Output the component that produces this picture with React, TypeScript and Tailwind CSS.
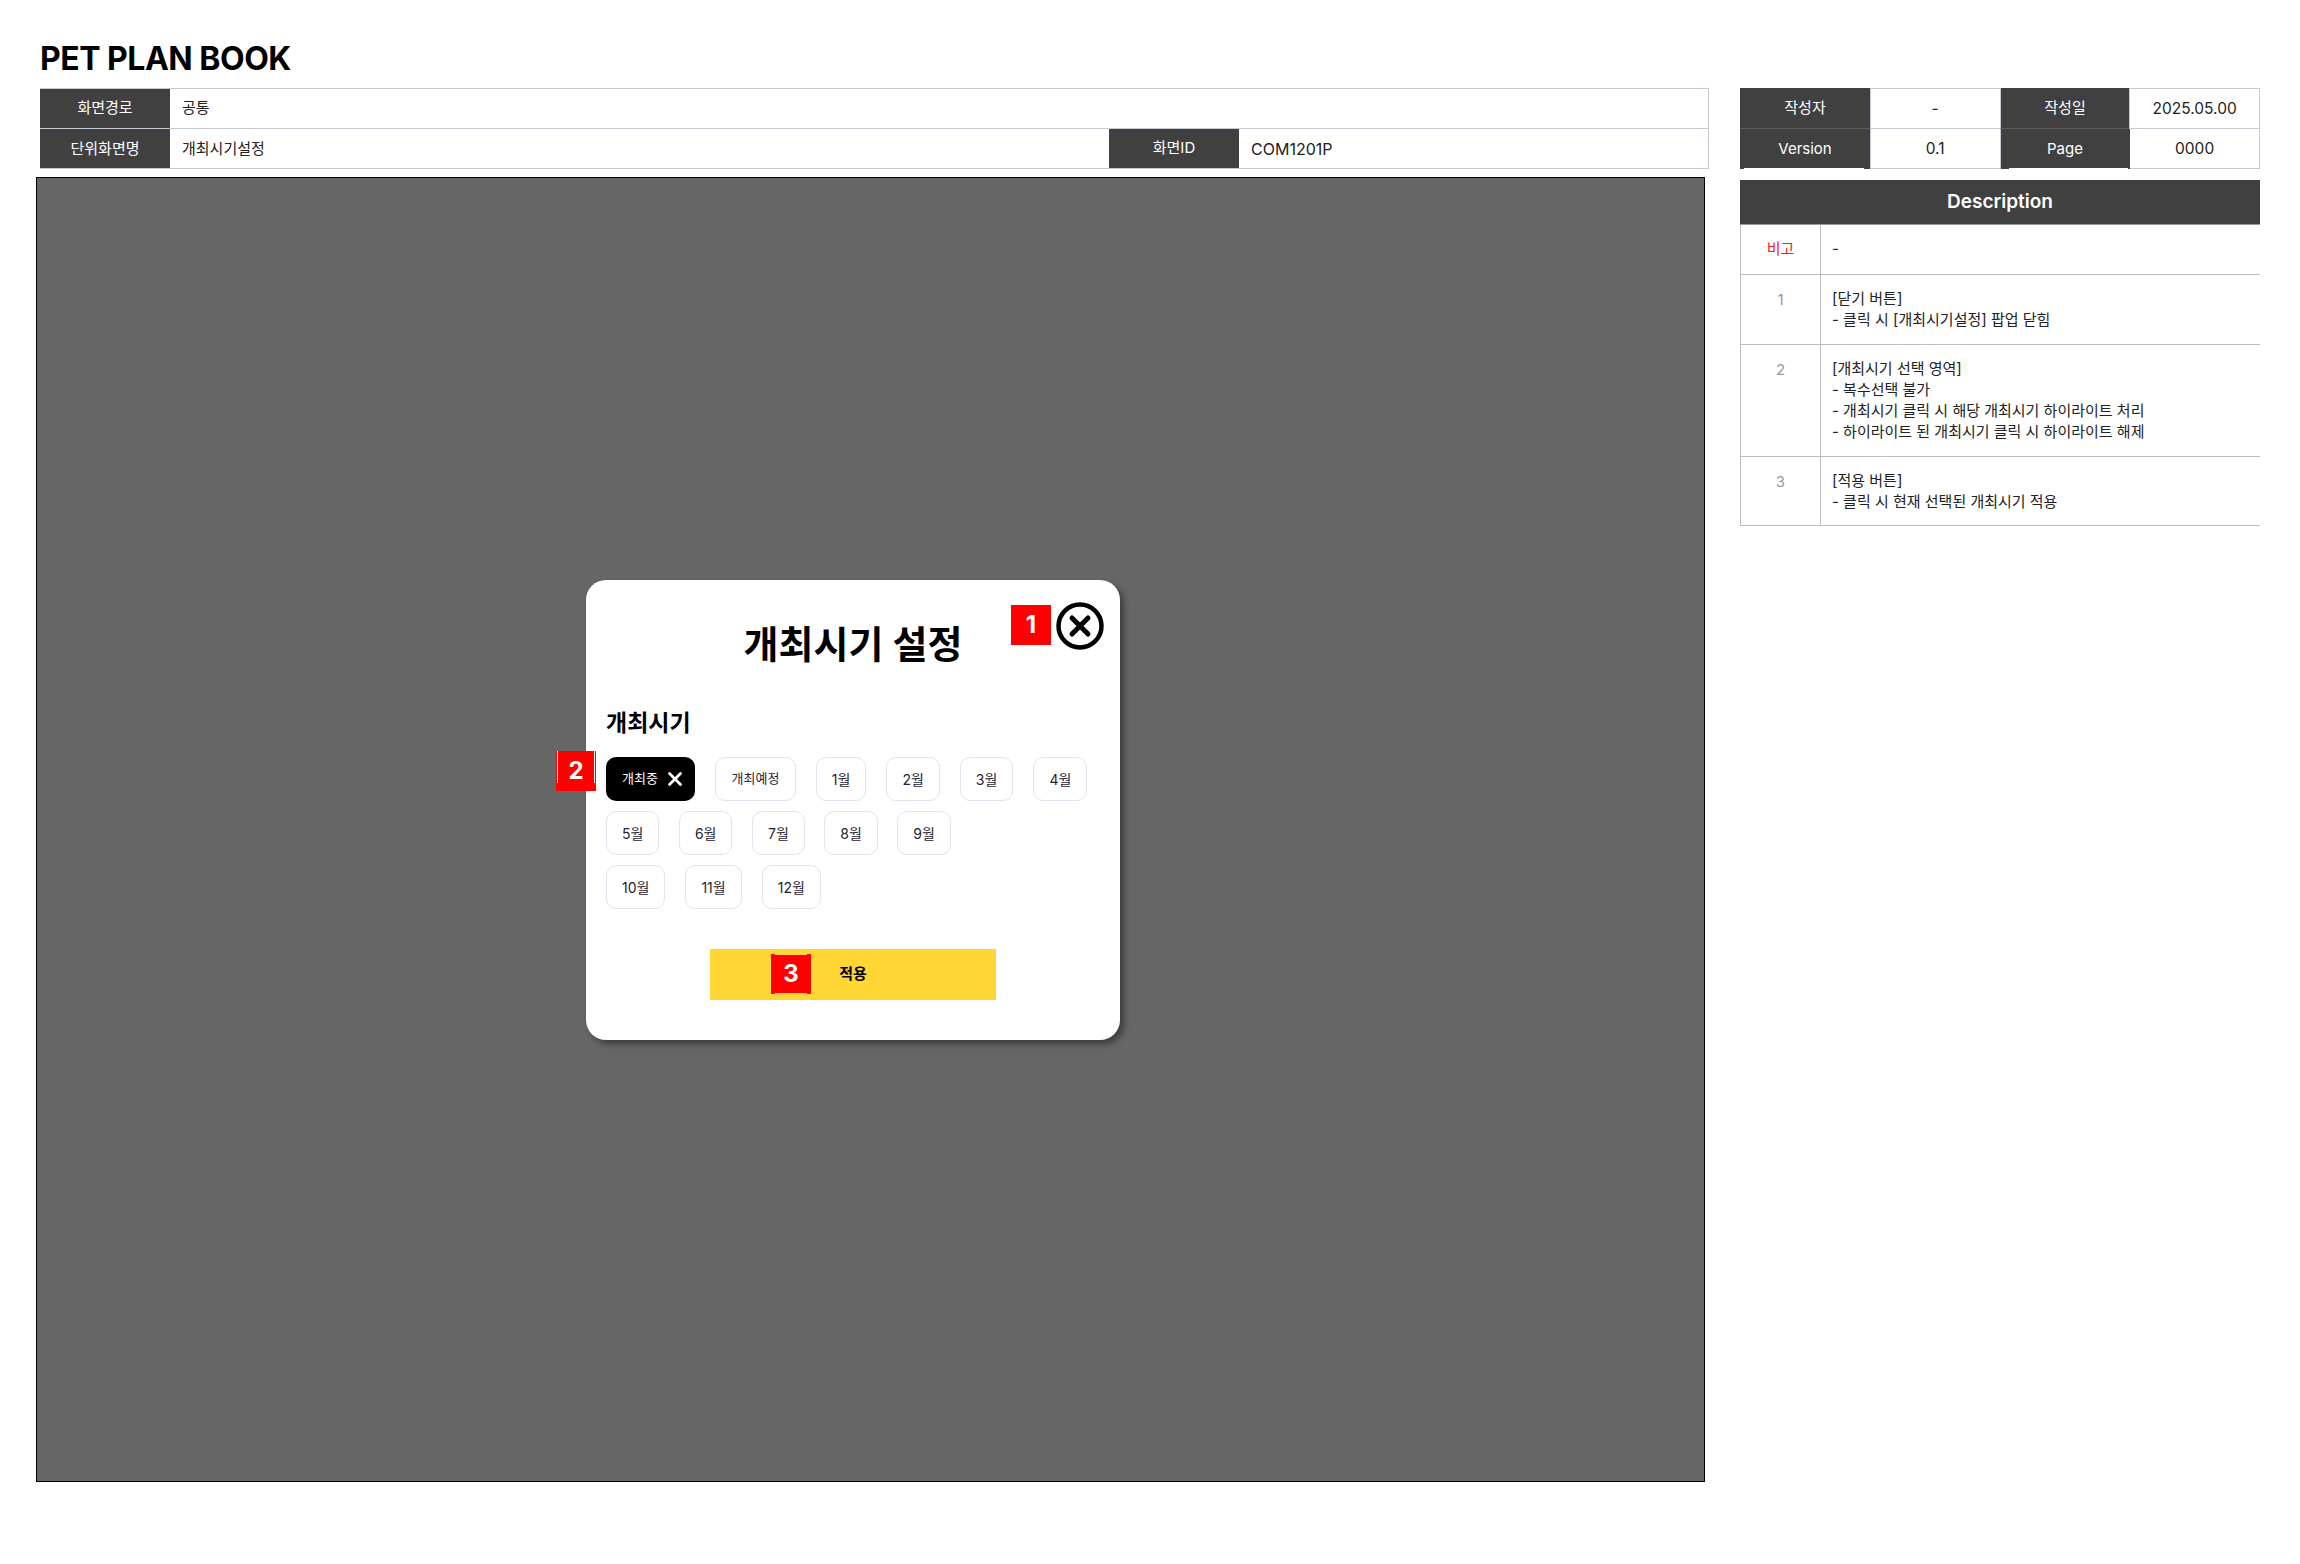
import { X } from 'lucide-react';

const FONT = "font-['Inter','Noto_Sans_CJK_KR',sans-serif]";

const row1 = ['1월', '2월', '3월', '4월'];
const row2 = ['5월', '6월', '7월', '8월', '9월'];
const row3 = ['10월', '11월', '12월'];

const descRows = [
  { no: '1', h: 'h-[70px]', lines: ['[닫기 버튼]', '- 클릭 시 [개최시기설정] 팝업 닫힘'] },
  {
    no: '2',
    h: 'h-[112px]',
    lines: [
      '[개최시기 선택 영역]',
      '- 복수선택 불가',
      '- 개최시기 클릭 시 해당 개최시기 하이라이트 처리',
      '- 하이라이트 된 개최시기 클릭 시 하이라이트 해제',
    ],
  },
  { no: '3', h: 'h-[69px]', lines: ['[적용 버튼]', '- 클릭 시 현재 선택된 개최시기 적용'] },
];

function Label({ children, className = '' }: { children: React.ReactNode; className?: string }) {
  return (
    <div className={`w-[130px] shrink-0 bg-[#404040] text-white text-[15px] flex items-center justify-center ${className}`}>
      {children}
    </div>
  );
}

function Chip({ label }: { label: string }) {
  return (
    <button className="h-[44px] px-[15px] rounded-[10px] border border-[#e1e3ee] bg-white text-[14px] text-[#1f2333] flex items-center">
      {label}
    </button>
  );
}

function Badge({ n, className = '', children }: { n: string; className?: string; children?: React.ReactNode }) {
  return (
    <div className={`absolute w-[40px] h-[40px] bg-[#ff0000] text-white text-[24px] font-bold flex items-center justify-center ${className}`}>
      {n}
      {children}
    </div>
  );
}

export default function App() {
  return (
    <div className={`${FONT} w-[2300px] h-[1564px] bg-white flex gap-[31px] pl-[36px] text-[#222]`}>
      <div className="w-[1673px] shrink-0">
        <h1 className="pt-[39px] pl-[4px] h-[88px] text-[32px] leading-[40px] font-bold text-black tracking-[-0.5px]">PET PLAN BOOK</h1>

        <div className="ml-[4px] w-[1669px] border-r border-b border-[#c6cad4] text-[15px]">
          <div className="flex h-[40px] border-t border-[#c6cad4]">
            <Label>화면경로</Label>
            <div className="flex-1 flex items-center pl-[12px]">공통</div>
          </div>
          <div className="flex h-[40px] border-t border-[#c6cad4]">
            <Label className="pt-px">단위화면명</Label>
            <div className="w-[939px] flex items-center pl-[12px] pt-px">개최시기설정</div>
            <Label>화면ID</Label>
            <div className="flex-1 flex items-center pl-[12px] text-[16px]">COM1201P</div>
          </div>
        </div>

        {/* 팝업 미리보기 */}
        <div className="mt-[8px] w-[1669px] h-[1305px] bg-[#666666] border border-black flex items-center justify-center pr-[35px] pb-[39px]">
          <div className="relative w-[534px] h-[460px] bg-white rounded-[20px] shadow-[4px_4px_6px_rgba(0,0,0,0.4)] px-[20px] pt-[41px]">
            <h2 className="text-center text-[38px] leading-[46px] font-bold text-black">개최시기 설정</h2>
            <Badge n="1" className="left-[425px] top-[25px]" />
            <svg className="absolute left-[470px] top-[22px]" width="48" height="48" viewBox="0 0 48 48" fill="none" stroke="#000">
              <circle cx="24" cy="24" r="21.5" strokeWidth="4.5" />
              <path d="M16 16 32 32M32 16 16 32" strokeWidth="5" strokeLinecap="round" />
            </svg>

            <p className="mt-[40px] text-[23px] leading-[32px] font-bold text-black">개최시기</p>

            <Badge n="2" className="left-[-30px] top-[171px]">
              <span className="absolute left-[1px] top-0 w-px h-[32px] bg-white" />
              <span className="absolute right-[1px] top-0 w-px h-[32px] bg-white" />
            </Badge>

            <div className="mt-[18px] flex gap-[20px]">
              <button className="h-[44px] w-[89px] rounded-[10px] bg-black text-white text-[13px] pl-[16px] flex items-center gap-[6px]">
                개최중
                <X size={22} strokeWidth={3} />
              </button>
              <button className="h-[44px] px-[15.5px] rounded-[10px] border border-[#e1e3ee] bg-white text-[13px] text-[#1f2333] flex items-center">
                개최예정
              </button>
              {row1.map((m) => <Chip key={m} label={m} />)}
            </div>
            <div className="mt-[10px] flex gap-[19.5px]">
              {row2.map((m) => <Chip key={m} label={m} />)}
            </div>
            <div className="mt-[10px] flex gap-[20px]">
              {row3.map((m) => <Chip key={m} label={m} />)}
            </div>

            <button className="block mx-auto mt-[40px] w-[286px] h-[51px] bg-[#ffd633] text-black text-[15px] font-bold">적용</button>

            <Badge n="3" className="left-[185px] top-[374px]">
              <span className="absolute left-[4px] right-[4px] top-0 h-px bg-[#ffd633]" />
              <span className="absolute left-[4px] right-[4px] bottom-0 h-px bg-[#ffd633]" />
            </Badge>
          </div>
        </div>
      </div>

      <div className="w-[520px] shrink-0 pt-[88px]">
        <div className="grid grid-cols-4 h-[81px] text-[15.5px] border-r border-b border-[#c6cad4]">
          <Label className="h-[41px] border-b border-[#5c5c5c]">작성자</Label>
          <div className="flex items-center justify-center border-l border-t border-b border-[#c6cad4]">-</div>
          <Label className="h-[41px] border-b border-[#5c5c5c] border-l border-l-[#c6cad4]">작성일</Label>
          <div className="flex items-center justify-center border-l border-t border-b border-[#c6cad4]">2025.05.00</div>
          <Label className="relative h-[40px] pt-px">
            Version
            <span className="absolute left-[4px] right-[6px] bottom-0 h-px bg-white" />
          </Label>
          <div className="flex items-center justify-center border-l border-[#c6cad4]">0.1</div>
          <Label className="relative h-[40px] pt-px border-l border-l-[#c6cad4]">
            Page
            <span className="absolute left-[8px] right-[2px] bottom-0 h-px bg-white" />
          </Label>
          <div className="flex items-center justify-center border-l border-[#c6cad4]">0000</div>
        </div>

        <div className="mt-[11px] h-[45px] pt-px bg-[#404040] border-b border-[#999] text-white text-[19px] font-semibold flex items-center justify-center">
          Description
        </div>
        <div className="flex h-[50px] border-l border-b border-[#bdbdbd] text-[15px]">
          <div className="w-[80px] border-r border-[#bdbdbd] flex items-center justify-center text-[#ee1c25]">비고</div>
          <div className="flex items-center pl-[11px]">-</div>
        </div>
        {descRows.map((r) => (
          <div key={r.no} className={`flex ${r.h} border-l border-b border-[#bdbdbd] text-[15px] leading-[21px]`}>
            <div className="w-[80px] border-r border-[#bdbdbd] pt-[14px] text-center text-[#999]">{r.no}</div>
            <div className="pl-[11px] pt-[13px]">
              {r.lines.map((l) => <p key={l}>{l}</p>)}
            </div>
          </div>
        ))}
      </div>
    </div>
  );
}
